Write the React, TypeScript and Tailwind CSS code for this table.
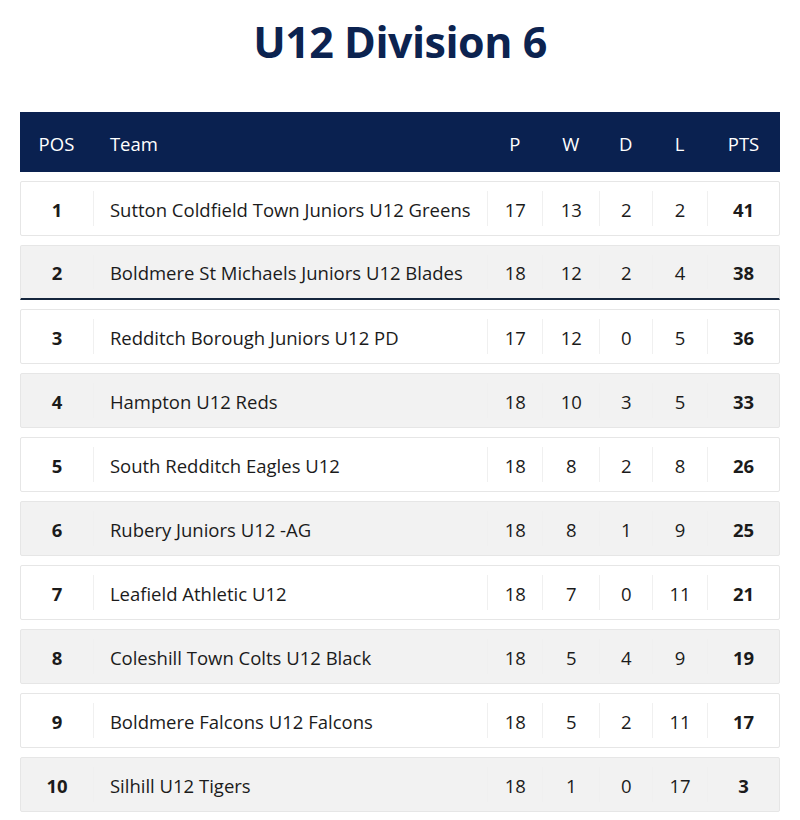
import React from 'react';

type Row = { pos: number; team: string; p: number; w: number; d: number; l: number; pts: number };

const ROWS: Row[] = [
  { pos: 1, team: 'Sutton Coldfield Town Juniors U12 Greens', p: 17, w: 13, d: 2, l: 2, pts: 41 },
  { pos: 2, team: 'Boldmere St Michaels Juniors U12 Blades', p: 18, w: 12, d: 2, l: 4, pts: 38 },
  { pos: 3, team: 'Redditch Borough Juniors U12 PD', p: 17, w: 12, d: 0, l: 5, pts: 36 },
  { pos: 4, team: 'Hampton U12 Reds', p: 18, w: 10, d: 3, l: 5, pts: 33 },
  { pos: 5, team: 'South Redditch Eagles U12', p: 18, w: 8, d: 2, l: 8, pts: 26 },
  { pos: 6, team: 'Rubery Juniors U12 -AG', p: 18, w: 8, d: 1, l: 9, pts: 25 },
  { pos: 7, team: 'Leafield Athletic U12', p: 18, w: 7, d: 0, l: 11, pts: 21 },
  { pos: 8, team: 'Coleshill Town Colts U12 Black', p: 18, w: 5, d: 4, l: 9, pts: 19 },
  { pos: 9, team: 'Boldmere Falcons U12 Falcons', p: 18, w: 5, d: 2, l: 11, pts: 17 },
  { pos: 10, team: 'Silhill U12 Tigers', p: 18, w: 1, d: 0, l: 17, pts: 3 },
];

const Cell: React.FC<{ className?: string; children: React.ReactNode }> = ({ className = '', children }) => (
  <div className={`flex items-center justify-center border-l border-[#f0f0f0] my-[9px] pt-[2px] ${className}`}>{children}</div>
);

const App: React.FC = () => {
  return (
    <div className="w-[800px] h-[820px] bg-white px-[20px] font-['Open_Sans',sans-serif] text-[#1b1b1b]">
      <h1 className="h-[112px] pt-[10px] flex items-start justify-center text-[43px] font-bold text-[#0c2350] tracking-[-0.5px]">
        U12 Division 6
      </h1>

      {/* header bar */}
      <div className="flex h-[60px] bg-[#0a2150] text-white text-[18.5px] items-center pt-[3px]">
        <div className="w-[73px] text-center">POS</div>
        <div className="w-[395px] pl-[17px]">Team</div>
        <div className="w-[55px] text-center">P</div>
        <div className="w-[57px] text-center">W</div>
        <div className="w-[53px] text-center">D</div>
        <div className="w-[55px] text-center">L</div>
        <div className="w-[73px] text-center">PTS</div>
      </div>

      <div className="flex flex-col gap-[9px] mt-[9px]">
        {ROWS.map((r) => (
          <div
            key={r.pos}
            className={`flex h-[55px] text-[18.5px] rounded-[2px] border border-[#e6e6e6] ${
              r.pos % 2 === 0 ? 'bg-[#f2f2f2]' : 'bg-white'
            } ${r.pos === 2 ? 'border-b-2 border-b-[#15263d] rounded-b-none' : ''}`}
          >
            <div className="w-[72px] flex items-center justify-center font-bold pt-[2px]">{r.pos}</div>
            <Cell className="w-[395px] !justify-start pl-[16px]">{r.team}</Cell>
            <Cell className="w-[55px]">{r.p}</Cell>
            <Cell className="w-[57px]">{r.w}</Cell>
            <Cell className="w-[53px]">{r.d}</Cell>
            <Cell className="w-[55px]">{r.l}</Cell>
            <Cell className="w-[72px] font-bold">{r.pts}</Cell>
          </div>
        ))}
      </div>
    </div>
  );
};

export default App;
